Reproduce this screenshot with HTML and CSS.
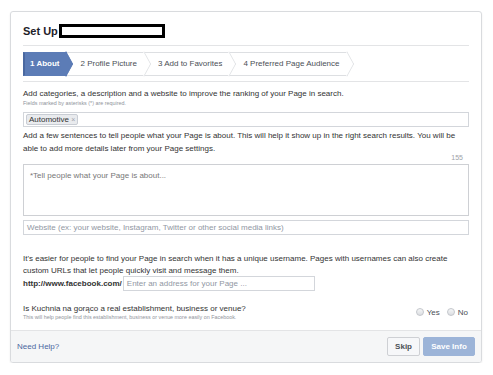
FILE: index.html
```html
<!DOCTYPE html>
<html lang="en">

<head>
    <meta charset="UTF-8">
    <title>Set Up Page</title>
    <link rel="stylesheet" href="styles.css">
</head>

<body>
    <div class="card">
        <div class="card-body">
            <div class="title">Set Up<span class="redacted"></span></div>

            <!-- Step tabs -->
            <div class="steps-row">
                <div class="step active">1 About</div>
                <div class="step">2 Profile Picture</div>
                <div class="step">3 Add to Favorites</div>
                <div class="step">4 Preferred Page Audience</div>
            </div>

            <p class="intro">Add categories, a description and a website to improve the ranking of your Page in search.</p>
            <p class="note">Fields marked by asterisks (*) are required.</p>

            <div class="token-box">
                <span class="token">Automotive <span class="token-x">&times;</span></span>
            </div>

            <p class="text about">Add a few sentences to tell people what your Page is about. This will help it show up in the right search results. You will be able to add more details later from your Page settings.</p>
            <div class="counter">155</div>
            <div class="textarea">*Tell people what your Page is about...</div>
            <div class="input website">Website (ex: your website, Instagram, Twitter or other social media links)</div>

            <p class="text username">It's easier for people to find your Page in search when it has a unique username. Pages with usernames can also create custom URLs that let people quickly visit and message them.</p>
            <div class="url-row">
                <span class="url-prefix">http://www.facebook.com/</span>
                <div class="input url-input">Enter an address for your Page ...</div>
            </div>

            <div class="question-row">
                <div>
                    <div class="question">Is Kuchnia na gorąco a real establishment, business or venue?</div>
                    <div class="note">This will help people find this establishment, business or venue more easily on Facebook.</div>
                </div>
                <div class="radios">
                    <span class="radio"></span><span class="radio-label">Yes</span>
                    <span class="radio"></span><span class="radio-label">No</span>
                </div>
            </div>
        </div>

        <div class="card-footer">
            <a class="help" href="#">Need Help?</a>
            <div class="buttons">
                <button class="btn">Skip</button>
                <button class="btn primary">Save Info</button>
            </div>
        </div>
    </div>
</body>

</html>
```

FILE: styles.css
```css
/* Global styles */
* {
    padding: 0;
    margin: 0;
    box-sizing: border-box;
}

body {
    font-family: "Liberation Sans", Arial, sans-serif;
    font-size: 8px;
    color: #1d2129;
    background-color: #fff;
}

.card {
    width: 472px;
    height: 352px;
    margin: 11px 0 0 10px;
    border: 1px solid #d9dbde;
    border-radius: 3px;
    box-shadow: 0 1px 2px rgba(0, 0, 0, 0.08);
    display: flex;
    flex-direction: column;
    overflow: hidden;
}

.card-body {
    flex: 1;
    padding: 0 12px;
}

/* Header */
.title {
    display: flex;
    align-items: center;
    height: 34px;
    padding-top: 4px;
    font-size: 11px;
    font-weight: bold;
    border-bottom: 1px solid #e3e4e6;
}

.redacted {
    display: inline-block;
    width: 106px;
    height: 14px;
    border: 3px solid #000;
    margin-left: 1px;
}

/* Steps */
.steps-row {
    display: flex;
    padding: 6px 0 5px;
    border-bottom: 1px solid #e3e4e6;
}

.step {
    position: relative;
    height: 24px;
    line-height: 22px;
    padding: 0 8px 0 13px;
    color: #4b4f56;
    background-color: #fff;
    border-top: 1px solid #dddfe2;
    border-bottom: 1px solid #dddfe2;
}

.step::after {
    content: '';
    position: absolute;
    top: 2px;
    right: -8px;
    width: 17px;
    height: 17px;
    background-color: inherit;
    border-top: 1px solid #dddfe2;
    border-right: 1px solid #dddfe2;
    transform: scaleX(0.55) rotate(45deg);
    z-index: 1;
}

.step.active {
    padding-left: 5px;
    padding-right: 8px;
    color: #fff;
    font-weight: bold;
    background-color: #5c7cb6;
    border-color: #5c7cb6;
    border-left: 2px solid #4a68a0;
}

.step.active::after {
    border-color: #5c7cb6;
}

/* Body text */
.intro {
    margin-top: 6px;
    line-height: 12px;
    color: #333;
}

.note {
    font-size: 5.4px;
    line-height: 6px;
    color: #90949c;
}

.token-box {
    height: 15px;
    margin-top: 6px;
    padding: 1px 2px;
    border: 1px solid #d3d6db;
}

.token {
    display: inline-block;
    height: 11px;
    line-height: 10px;
    padding: 0 2px;
    color: #333;
    background-color: #e9ebee;
    border: 1px solid #c9cdd4;
    border-radius: 2px;
}

.token-x {
    color: #a0a4ab;
    font-size: 7px;
}

.text {
    line-height: 13px;
    color: #333;
}

.about {
    margin-top: 2px;
}

.counter {
    text-align: right;
    padding-right: 6px;
    font-size: 7px;
    line-height: 6px;
    color: #9ea2a8;
}

.textarea {
    height: 52px;
    margin-top: 3px;
    padding: 6px 6px;
    color: #777;
    border: 1px solid #ced0d4;
}

.input {
    height: 15px;
    line-height: 13px;
    padding: 0 3px;
    color: #9197a3;
    border: 1px solid #d3d6db;
}

.website {
    margin-top: 4px;
}

.username {
    margin-top: 18px;
    line-height: 12px;
}

.url-row {
    display: flex;
    align-items: center;
    margin-top: -1px;
}

.url-prefix {
    font-weight: bold;
    color: #333;
}

.url-input {
    width: 192px;
    margin-left: 1px;
}

/* Question */
.question-row {
    display: flex;
    justify-content: space-between;
    align-items: center;
    margin-top: 13px;
}

.question {
    line-height: 10px;
    color: #333;
}

.radios {
    display: flex;
    align-items: center;
    gap: 3px;
    padding-right: 1px;
    color: #4b4f56;
}

.radio {
    width: 8px;
    height: 8px;
    border: 1px solid #c4c7cc;
    border-radius: 50%;
    background: linear-gradient(#f5f6f7, #dcdee2);
}

.radio-label {
    margin-right: 4px;
}

.radio-label:last-child {
    margin-right: 0;
}

/* Footer */
.card-footer {
    display: flex;
    justify-content: space-between;
    align-items: center;
    height: 32px;
    padding: 0 6px;
    background-color: #f5f6f7;
    border-top: 1px solid #e3e4e6;
}

.help {
    color: #4b67a1;
    text-decoration: none;
}

.buttons {
    display: flex;
    gap: 3px;
}

.btn {
    height: 19px;
    padding: 0 7px;
    font-family: "Liberation Sans", Arial, sans-serif;
    font-size: 8px;
    font-weight: bold;
    color: #4b4f56;
    background-color: #f6f7f9;
    border: 1px solid #ced0d4;
    border-radius: 2px;
}

.btn.primary {
    width: 52px;
    color: #fff;
    background-color: #9cb4d8;
    border-color: #9cb4d8;
}
```
